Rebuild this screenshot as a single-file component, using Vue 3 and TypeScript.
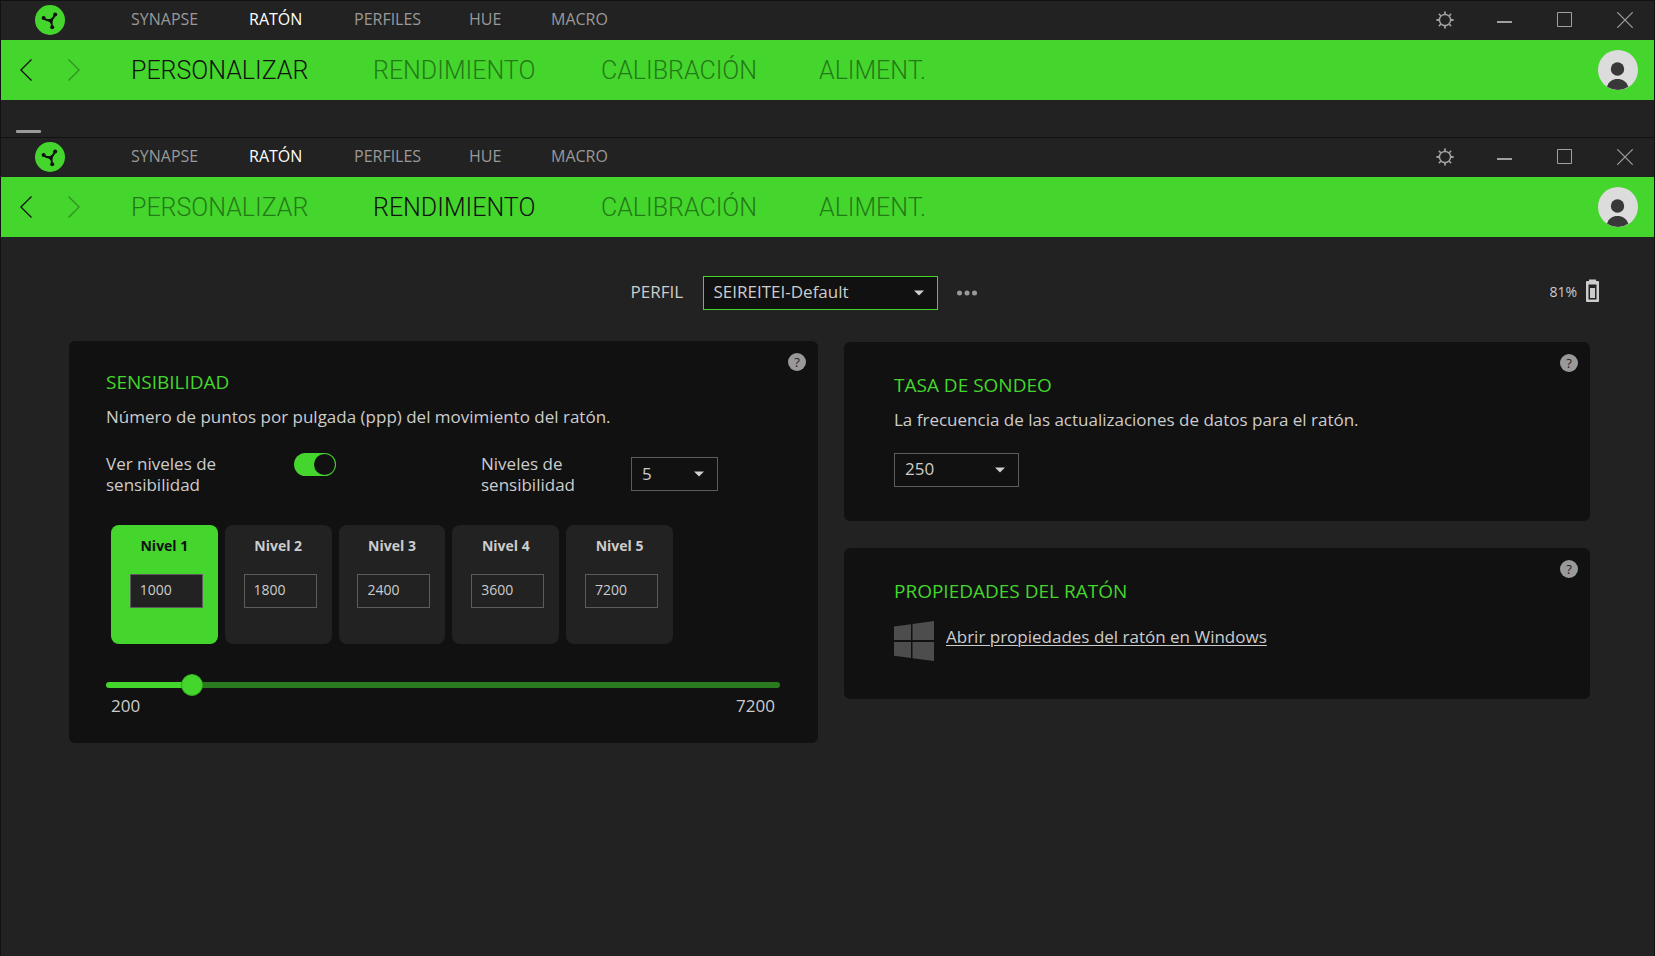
<script setup lang="ts">
import { ref } from 'vue'

interface Pane {
  id: string
  active: string
}

const panes: Pane[] = [
  { id: 'custom', active: 'PERSONALIZAR' },
  { id: 'performance', active: 'RENDIMIENTO' },
]

const sections: string[] = ['SYNAPSE', 'RATÓN', 'PERFILES', 'HUE', 'MACRO']
const tabs: string[] = ['PERSONALIZAR', 'RENDIMIENTO', 'CALIBRACIÓN', 'ALIMENT.']

const profile = ref('SEIREITEI-Default')
const showStages = ref(true)
const stageCount = ref('5')
const pollingRate = ref('250')
const battery = ref(81)
const stages = ref<number[]>([1000, 1800, 2400, 3600, 7200])
const activeStage = ref(0)
const minDpi = 200
const maxDpi = 7200

function fillWidth(): string {
  return ((stages.value[activeStage.value] - minDpi) / (maxDpi - minDpi)) * 100 + '%'
}
</script>

<template>
  <div class="page">
    <section v-for="pane in panes" :key="pane.id" class="window" :class="pane.id">
      <header class="topbar">
        <svg class="logo" viewBox="0 0 30 30" aria-hidden="true">
          <circle cx="15" cy="15" r="15" fill="#44d62c" />
          <g fill="none" stroke="#111" stroke-width="2" stroke-linecap="round">
            <path d="M15 15.5Q18.5 14 20 9.5" />
            <path d="M15 15.5Q12 15.8 8.5 13.2" />
            <path d="M15 15.5Q17.2 18.5 17.2 22" />
          </g>
          <path d="M11 14L15 14.2L18.8 11.5L17.2 19L14.4 17Z" fill="#111" />
          <circle cx="20.2" cy="9.4" r="2" fill="#111" />
          <circle cx="8.6" cy="13" r="2" fill="#111" />
          <circle cx="17.2" cy="22.3" r="2" fill="#111" />
        </svg>
        <nav class="sections" aria-label="Secciones">
          <a v-for="s in sections" :key="s" href="#" :class="{ current: s === 'RATÓN' }">{{ s }}</a>
        </nav>
        <div class="controls">
          <button type="button" aria-label="Configuración">
            <svg width="18" height="18" viewBox="0 0 18 18" fill="none" stroke="#a0a0a0">
              <circle cx="9" cy="9" r="5.6" stroke-width="1.5" />
              <path d="M9 0.4V3.4M9 14.6V17.6M0.4 9H3.4M14.6 9H17.6" stroke-width="1.8" />
              <path d="M2.9 2.9L5 5M13 13L15.1 15.1M2.9 15.1L5 13M13 5L15.1 2.9" stroke-width="1.6" />
            </svg>
          </button>
          <button type="button" aria-label="Minimizar">
            <svg width="16" height="16" viewBox="0 0 16 16"><path d="M0 9H15V11H0Z" fill="#a0a0a0" /></svg>
          </button>
          <button type="button" aria-label="Maximizar">
            <svg width="16" height="16" viewBox="0 0 16 16"><path d="M0.5 0.5H14.5V14.5H0.5Z" fill="none" stroke="#a0a0a0" /></svg>
          </button>
          <button type="button" aria-label="Cerrar">
            <svg width="16" height="16" viewBox="0 0 16 16"><path d="M0.3 0.3L15.7 15.7M15.7 0.3L0.3 15.7" stroke="#a0a0a0" stroke-width="1.2" /></svg>
          </button>
        </div>
      </header>

      <div class="tabbar">
        <div class="history">
          <button type="button" aria-label="Atrás">
            <svg width="12" height="22" viewBox="0 0 12 22" fill="none" stroke="#111" stroke-width="1.3"><path d="M11.5 0.5L0.9 11L11.5 21.5" /></svg>
          </button>
          <button type="button" aria-label="Adelante" class="dim">
            <svg width="12" height="22" viewBox="0 0 12 22" fill="none" stroke="#111" stroke-width="1.3"><path d="M0.5 0.5L11.1 11L0.5 21.5" /></svg>
          </button>
        </div>
        <nav class="tabs" aria-label="Pestañas">
          <a v-for="t in tabs" :key="t" href="#" :class="{ current: t === pane.active }">{{ t }}</a>
        </nav>
        <button type="button" class="avatar" aria-label="Cuenta">
          <svg width="40" height="40" viewBox="0 0 40 40">
            <circle cx="20" cy="20" r="20" fill="#dcdcdc" />
            <circle cx="19.5" cy="19" r="6.7" fill="#383838" />
            <path d="M9 36.7C10.5 31.6 14.6 29 19.5 29S28.5 31.6 30.3 36.7Q25.5 40 20 40T9 36.7Z" fill="#383838" />
          </svg>
        </button>
      </div>

      <div v-if="pane.id === 'custom'" class="peek"><span class="handle"></span></div>

      <main v-else>
        <div class="profile-row">
          <div class="profile">
            <label for="profile">PERFIL</label>
            <span class="drop profile-drop">
              <select id="profile" v-model="profile"><option>SEIREITEI-Default</option></select>
              <svg width="10" height="6" viewBox="0 0 10 6"><path d="M0 0.5H10L5 5.5Z" fill="#d0d0d0" /></svg>
            </span>
            <button type="button" class="more" aria-label="Más opciones">
              <svg width="20" height="6" viewBox="0 0 20 6" fill="#999"><circle cx="2.5" cy="3" r="2.5" /><circle cx="10" cy="3" r="2.5" /><circle cx="17.5" cy="3" r="2.5" /></svg>
            </button>
          </div>
          <div class="battery">
            <span>{{ battery }}%</span>
            <svg width="13" height="23" viewBox="0 0 13 23">
              <path d="M3 0.5H10V2H12Q13 2 13 3V22Q13 23 12 23H1Q0 23 0 22V3Q0 2 1 2H3Z" fill="#ccc" />
              <path d="M2.5 5.5H10.5V20.5H2.5Z" fill="#222" />
              <path d="M4 9H9V19H4Z" fill="#ccc" />
            </svg>
          </div>
        </div>

        <div class="panels">
          <section class="panel sensitivity">
            <button type="button" class="help" aria-label="Ayuda">?</button>
            <h2>SENSIBILIDAD</h2>
            <p>Número de puntos por pulgada (ppp) del movimiento del ratón.</p>
            <div class="options">
              <label for="show-stages">Ver niveles de sensibilidad</label>
              <input id="show-stages" v-model="showStages" type="checkbox" class="toggle" />
              <label for="stage-count">Niveles de sensibilidad</label>
              <span class="drop stage-drop">
                <select id="stage-count" v-model="stageCount"><option v-for="n in 5" :key="n">{{ n }}</option></select>
                <svg width="10" height="6" viewBox="0 0 10 6"><path d="M0 0.5H10L5 5.5Z" fill="#d0d0d0" /></svg>
              </span>
            </div>
            <div class="stages">
              <div v-for="(_, i) in stages" :key="i" class="stage" :class="{ on: i === activeStage }">
                <label :for="'stage-' + i">Nivel {{ i + 1 }}</label>
                <input :id="'stage-' + i" v-model.number="stages[i]" type="text" @focus="activeStage = i" />
              </div>
            </div>
            <input
              v-model.number="stages[activeStage]"
              class="slider"
              type="range"
              :min="minDpi"
              :max="maxDpi"
              step="100"
              aria-label="Sensibilidad"
              :style="{ '--fill': fillWidth() }"
            />
            <div class="range"><span>{{ minDpi }}</span><span>{{ maxDpi }}</span></div>
          </section>

          <div class="side">
            <section class="panel polling">
              <button type="button" class="help" aria-label="Ayuda">?</button>
              <h2>TASA DE SONDEO</h2>
              <p><label for="polling">La frecuencia de las actualizaciones de datos para el ratón.</label></p>
              <span class="drop polling-drop">
                <select id="polling" v-model="pollingRate"><option>125</option><option>250</option><option>500</option><option>1000</option></select>
                <svg width="10" height="6" viewBox="0 0 10 6"><path d="M0 0.5H10L5 5.5Z" fill="#d0d0d0" /></svg>
              </span>
            </section>
            <section class="panel properties">
              <button type="button" class="help" aria-label="Ayuda">?</button>
              <h2>PROPIEDADES DEL RATÓN</h2>
              <div class="open-row">
                <svg width="40" height="40" viewBox="0 0 40 40" fill="#4d4d4d" aria-hidden="true">
                  <path d="M0 5.5L17 3.2V19H0ZM18.5 3L40 0V19H18.5ZM0 21H17V37L0 34.7ZM18.5 21H40V40L18.5 37.2Z" />
                </svg>
                <a href="#">Abrir propiedades del ratón en Windows</a>
              </div>
            </section>
          </div>
        </div>
      </main>
    </section>
  </div>
</template>

<style>
body {
  margin: 0;
  background: #222;
}
</style>

<style scoped>
* {
  box-sizing: border-box;
}
.page {
  display: flex;
  flex-direction: column;
  min-height: 100vh;
  background: #222;
  color: #ccc;
  font: 17px/24px "Open Sans", "Noto Sans", sans-serif;
}
.window {
  border: 1px solid #111;
  border-bottom: 0;
}
.window.performance {
  flex: 1;
}
button {
  display: flex;
  align-items: center;
  justify-content: center;
  padding: 0;
  border: 0;
  background: none;
  color: inherit;
  font: inherit;
}
a {
  color: inherit;
  text-decoration: none;
}
svg {
  display: block;
  flex: none;
}

.topbar {
  display: flex;
  align-items: center;
  height: 39px;
  padding: 0 0 1px 34px;
}
.logo {
  width: 30px;
  height: 30px;
}
.sections {
  display: grid;
  grid-template-columns: 118px 105px 115px 82px auto;
  margin-left: 66px;
  padding-bottom: 2px;
  color: #999;
  font-size: 16px;
  line-height: 22px;
}
.sections .current {
  color: #fff;
}
.controls {
  display: flex;
  margin: 0 -1px 0 auto;
}
.controls button {
  width: 60px;
  height: 38px;
}

.tabbar {
  display: flex;
  align-items: center;
  height: 60px;
  padding: 0 16px 0 19px;
  background: #44d62c;
}
.history {
  display: flex;
  gap: 36px;
}
.dim {
  opacity: 0.35;
}
.tabs {
  display: grid;
  grid-template-columns: 242px 228px 218px auto;
  margin-left: 51px;
  padding-top: 2px;
  color: #247a18;
  font: 300 25px/34px Roboto, "Open Sans", sans-serif;
}
.tabs .current {
  color: #111;
}
.avatar {
  margin-left: auto;
}

.peek {
  display: flex;
  align-items: flex-end;
  height: 37px;
  padding: 0 15px 4px;
}
.handle {
  width: 25px;
  height: 3px;
  border-radius: 1px;
  background: #999;
}

main {
  padding: 39px 0;
}
.profile-row {
  display: grid;
  grid-template-columns: 562fr auto 623fr;
  padding: 0 55px 0 68px;
}
.profile {
  display: flex;
  grid-column: 2;
  align-items: center;
}
.profile label {
  width: 72px;
  padding-bottom: 2px;
}
.more {
  margin-left: 19px;
}
.battery {
  display: flex;
  align-items: flex-end;
  justify-content: flex-end;
  gap: 9px;
  padding-bottom: 8px;
  font-size: 14px;
  line-height: 20px;
}

.drop {
  display: block;
  position: relative;
  height: 34px;
}
.drop svg {
  position: absolute;
  top: 14px;
  right: 14px;
  pointer-events: none;
}
.drop select {
  display: block;
  width: 100%;
  height: 34px;
  margin: 0;
  padding: 0 30px 2px 10px;
  border: 1px solid #5c5c5c;
  border-radius: 0;
  background: #111;
  color: #ccc;
  font: inherit;
  appearance: none;
}
.profile-drop {
  width: 235px;
}
.profile-drop select {
  border-color: #44d62c;
}
.stage-drop {
  width: 87px;
}
.polling-drop {
  width: 125px;
  margin-top: 21px;
}

.panels {
  display: grid;
  grid-template-columns: 749fr 746fr;
  align-items: start;
  gap: 26px;
  margin-top: 31px;
  padding: 0 64px 0 68px;
}
.side {
  display: grid;
  gap: 27px;
  padding-top: 1px;
}
.panel {
  position: relative;
  border-radius: 6px;
  background: #111;
}
.sensitivity {
  padding: 28px 38px 27px 37px;
}
.polling {
  padding: 30px 50px 34px;
}
.properties {
  padding: 30px 50px 38px;
}
h2 {
  margin: 0 0 10px;
  color: #44d62c;
  font-size: 19px;
  font-weight: 400;
  line-height: 26px;
}
p {
  margin: 0;
}
.help {
  position: absolute;
  top: 12px;
  right: 12px;
  width: 18px;
  height: 18px;
  border-radius: 50%;
  background: #999;
  color: #222;
  font-size: 13px;
  line-height: 18px;
}

.options {
  display: grid;
  grid-template-columns: 188px 187px 150px auto;
  align-items: center;
  justify-content: start;
  margin-top: 24px;
  line-height: 21px;
}
.options label {
  width: 120px;
}
.toggle {
  position: relative;
  align-self: start;
  width: 42px;
  height: 23px;
  margin: 0;
  border-radius: 12px;
  background: #44d62c;
  appearance: none;
}
.toggle::before {
  content: "";
  position: absolute;
  top: 1px;
  left: 1px;
  width: 21px;
  height: 21px;
  border-radius: 50%;
  background: #111;
}
.toggle:checked::before {
  left: 20px;
}

.stages {
  display: grid;
  grid-template-columns: repeat(5, 1fr);
  gap: 7px;
  max-width: 562px;
  margin: 30px 0 0 5px;
}
.stage {
  display: flex;
  flex-direction: column;
  gap: 18px;
  padding: 11px 15px 36px;
  border-radius: 8px;
  background: #222;
}
.stage label {
  font-size: 14px;
  font-weight: 700;
  line-height: 20px;
  text-align: center;
}
.stage input {
  align-self: flex-end;
  width: 73px;
  height: 34px;
  margin: 0;
  padding: 0 9px 3px;
  border: 1px solid #5c5c5c;
  border-radius: 0;
  background: #222;
  color: #ccc;
  font: inherit;
  font-size: 14px;
}
.stage.on {
  background: #44d62c;
}
.stage.on label {
  color: #111;
}

.slider {
  display: block;
  width: 100%;
  height: 22px;
  margin: 30px 0 0;
  background: none;
  appearance: none;
}
.slider::-webkit-slider-runnable-track {
  height: 6px;
  border-radius: 3px;
  background: linear-gradient(to right, #44d62c var(--fill), #2a7a1f var(--fill));
}
.slider::-webkit-slider-thumb {
  width: 22px;
  height: 22px;
  margin-top: -8px;
  border: 1px solid #35a823;
  border-radius: 50%;
  background: #44d62c;
  appearance: none;
}
.range {
  display: flex;
  justify-content: space-between;
  padding: 0 5px;
  line-height: 20px;
}

.open-row {
  display: flex;
  align-items: center;
  gap: 12px;
  margin-top: 17px;
}
.open-row a {
  padding-bottom: 8px;
  text-decoration: underline;
  text-decoration-thickness: 1px;
  text-underline-offset: 2px;
}
</style>
